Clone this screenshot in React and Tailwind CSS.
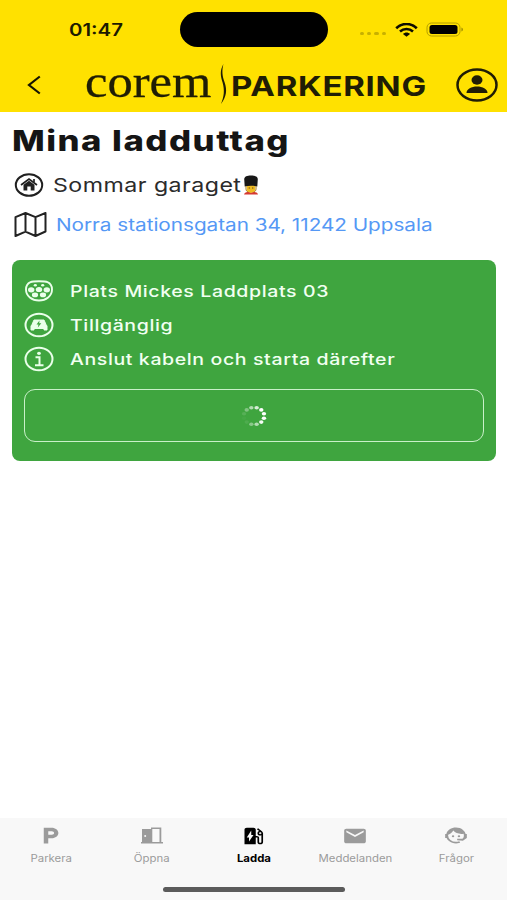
import React from 'react';
import { MdEvStation, MdLocalParking, MdEmail } from 'react-icons/md';

function StatusBar() {
  return (
    <div className="flex h-[59px] items-center">
      <div className="w-[180px] pl-[69px]">
        <span className="inline-block origin-left scale-x-[1.2] text-[17px] font-semibold leading-none text-[#1c1a00]">01:47</span>
      </div>
      <div className="h-[35px] w-[148px] rounded-full bg-black" />
      <div className="ml-8 mt-[8px] flex gap-[3px]">
        {[0, 1, 2, 3].map((i) => (
          <div key={i} className="h-[3.5px] w-[4.2px] rounded-full bg-[#c8b000]" />
        ))}
      </div>
      <svg className="ml-[9px] h-[14px] w-[23px]" viewBox="0 0 23 14" preserveAspectRatio="none" fill="none" stroke="#0d0c00" strokeWidth="2.6">
        <path d="M1.2 5.2C7 -.4 16 -.4 21.8 5.2" />
        <path d="M5 8.5c3.8-3.4 9.2-3.4 13 0" />
        <path d="M8 11c2-2 5-2 7 0l-3.500 2.800z" fill="#0d0c00" stroke="none" />
      </svg>
      <svg className="ml-2 h-[15px] w-[38px]" viewBox="0 0 38 15">
        <rect x="1" y="1" width="33" height="13" rx="4.500" fill="none" stroke="#b39e00" strokeWidth="1" />
        <rect x="3.500" y="3" width="28" height="9" rx="2.500" fill="#000" />
        <path d="M35.500 5.500v4c1.800-.6 1.800-3.400 0-4z" fill="#8f7f00" />
      </svg>
    </div>
  );
}

function Header() {
  return (
    <div className="flex h-[51px] items-center">
      <svg className="ml-[27px] h-[20px] w-[14px]" viewBox="0 0 14 20" fill="none" stroke="#161400" strokeWidth="2.200">
        <path d="M12.800 1.500L2 10l10.800 8.500" />
      </svg>
      <div className="ml-[44px] flex h-[51px] w-[133px] items-center pb-[5px]">
        <span className="inline-block origin-left scale-x-[1.1] font-['Liberation_Serif',serif] text-[46px] leading-none text-[#1f1d05] [-webkit-text-stroke:0.3px_#1f1d05]">corem</span>
      </div>
      <svg className="h-[41px] w-[10px]" viewBox="0 0 12 42" preserveAspectRatio="none" fill="#1f1d05">
        <path d="M6.500 0C2 7 3 12 5.500 19c2.500 8 2 14-2 22 7-8 7.500-14 4.500-22-3-7-3.500-12-1.500-19z" />
      </svg>
      <div className="ml-[3px] w-[200px] pt-[5px]">
        <span className="inline-block origin-left scale-x-[1.22] text-[27px] font-bold leading-none tracking-[0.6px] text-[#1f1d05]">PARKERING</span>
      </div>
      <svg className="ml-[25px] h-[34px] w-[42px]" viewBox="0 0 42 34" fill="#1f1d05">
        <ellipse cx="21" cy="17" rx="19.500" ry="15.500" fill="none" stroke="#1f1d05" strokeWidth="2.500" />
        <ellipse cx="21" cy="12" rx="5.500" ry="4.700" />
        <path d="M10.500 25c0-4 5-6.500 10.500-6.500S31.500 21 31.500 25z" />
      </svg>
    </div>
  );
}

function HomeIcon() {
  return (
    <svg className="h-6 w-[30px]" viewBox="0 0 30 24" fill="none" stroke="#202020">
      <ellipse cx="15" cy="12" rx="13.200" ry="10.800" strokeWidth="2" />
      <path d="M7 12l8-6 8 6" strokeWidth="1.700" />
      <path d="M9.500 11.800L15 7.800l5.500 4V17.500h-3.800v-4h-3.400v4H9.500z" fill="#202020" stroke="none" />
      <path d="M20 6v3" strokeWidth="1.700" />
    </svg>
  );
}

function GuardEmoji() {
  return (
    <svg className="h-[20px] w-[16px]" viewBox="0 0 16 20">
      <path d="M4 9h8v6c0 2-1.800 3-4 3s-4-1-4-3z" fill="#eebb22" />
      <path d="M1 19.500c.5-2 2.500-2.500 4.500-2.500L8 18l2.500-1c2 0 4 .5 4.500 2.500z" fill="#d63a32" />
      <path d="M1.200 4C1.500 1.500 4 .5 8 .5s6.500 1 6.800 3.500l-.5 7.500c-4-1-8.600-1-12.600 0z" fill="#171717" />
      <path d="M3 11v3c0 1.500 1 2.500 2 3M13 11v3c0 1.500-1 2.500-2 3" fill="none" stroke="#a57d18" />
      <path d="M5.700 13h1.200m2.200 0h1.200" stroke="#604010" />
    </svg>
  );
}

function MapIcon() {
  return (
    <svg className="h-[25px] w-[33px]" viewBox="0 0 33 25" fill="none" stroke="#222" strokeWidth="2" strokeLinejoin="round">
      <path d="M1.500 5.200L11.500 1l10 4.200L31.500 1v18.500L21.500 24l-10-4.300L1.500 24zM11.500 1v18.700M21.500 5.200V24" />
    </svg>
  );
}

function SocketIcon() {
  return (
    <svg className="h-[24px] w-[30px]" viewBox="0 0 30 24" fill="#eaffea">
      <path d="M6.500 3.200C9 2 21 2 23.500 3.200c3 1.300 4.500 4 4.500 7.300 0 6.500-6 11-13 11s-13-4.500-13-11c0-3.300 1.500-6 4.500-7.300z" fill="none" stroke="#eaffea" strokeWidth="1.900" />
      <ellipse cx="11.300" cy="6.200" rx="1.600" ry="1.300" />
      <ellipse cx="18.700" cy="6.200" rx="1.600" ry="1.300" />
      <ellipse cx="7.200" cy="10.800" rx="3.200" ry="2.600" />
      <ellipse cx="15" cy="10.500" rx="3.200" ry="2.600" />
      <ellipse cx="22.800" cy="10.800" rx="3.200" ry="2.600" />
      <ellipse cx="11" cy="15.900" rx="3.100" ry="2.400" />
      <ellipse cx="19" cy="15.900" rx="3.100" ry="2.400" />
    </svg>
  );
}

function CarIcon() {
  return (
    <svg className="h-[26px] w-[30px]" viewBox="0 0 30 26">
      <ellipse cx="15" cy="13" rx="13.500" ry="11.300" fill="none" stroke="#eaffea" strokeWidth="2" />
      <path d="M10 8h10l2 4.500 1 1.500v4h-3v-1.500H10V18H7v-4l1-1.500z" fill="#eaffea" stroke="#eaffea" strokeLinejoin="round" />
      <path d="M15.500 8.500l-3 4h2l-.7 3 3.500-4.200h-2.100z" fill="#3fa53f" />
    </svg>
  );
}

function InfoIcon() {
  return (
    <svg className="h-[26px] w-[30px]" viewBox="0 0 30 26" fill="none" stroke="#eaffea">
      <ellipse cx="15" cy="13" rx="13.500" ry="11.300" strokeWidth="2" />
      <path d="M11.500 11.200h4V19M11 19.200h8.500" strokeWidth="2" />
      <ellipse cx="15" cy="7.300" rx="1.900" ry="1.600" fill="#eaffea" stroke="none" />
    </svg>
  );
}

const dots = [0.12, 0.35, 0.6, 0.8, 1, 1, 1, 0.95, 0.6, 0.4, 0.08, 0.03];

function Spinner() {
  return (
    <svg className="h-[22px] w-[26px]" viewBox="0 0 26 22" fill="#fff">
      {dots.map((opacity, i) => {
        const a = ((i * 30 + 195) * Math.PI) / 180;
        return <ellipse key={i} cx={13 + 10.3 * Math.cos(a)} cy={11 + 8.6 * Math.sin(a)} rx="2.200" ry="1.800" opacity={opacity} />;
      })}
    </svg>
  );
}

function DoorIcon() {
  return (
    <svg className="h-[17px] w-[22px]" viewBox="0 0 22 17" fill="#9b9b9b">
      <path d="M1 2h9v14.500H0V15h1z" />
      <path d="M10 .5h10.300V15H22v1.500H10zM11.300 2v13h7.200V2z" fillRule="evenodd" />
      <circle cx="4.200" cy="9" r="1" fill="#f8f8f8" />
    </svg>
  );
}

function AgentIcon() {
  return (
    <svg className="h-[21px] w-[26px]" viewBox="0 0 24 24" preserveAspectRatio="none" fill="currentColor">
      <path d="M18.720 14.760C19.070 13.910 19.260 13 19.260 12C19.260 11.280 19.150 10.590 18.960 9.950C18.310 10.100 17.630 10.180 16.920 10.180C13.860 10.180 11.150 8.670 9.500 6.340C8.610 8.500 6.910 10.260 4.770 11.220C4.730 11.470 4.730 11.740 4.730 12A7.270 7.270 0 0 0 12 19.270C13.050 19.270 14.060 19.040 14.970 18.630C15.540 19.720 15.800 20.260 15.780 20.260C14.140 20.810 12.870 21.080 12 21.080C9.580 21.080 7.270 20.130 5.570 18.420C4.530 17.380 3.760 16.110 3.330 14.730H2V10.180H3.090C3.930 6.040 7.600 2.920 12 2.920C14.400 2.920 16.710 3.870 18.420 5.580C19.690 6.840 20.540 8.450 20.890 10.180H22V14.730H21.940L18.380 18L13.080 17.400V15.730H17.910L18.720 14.760Z" />
      <circle cx="9.270" cy="12.910" r="1.140" />
      <circle cx="14.720" cy="12.910" r="1.140" />
    </svg>
  );
}

const tabs = [
  { label: 'Parkera', icon: <MdLocalParking preserveAspectRatio="none" className="h-[21px] w-[27px]" /> },
  { label: 'Öppna', icon: <DoorIcon /> },
  { label: 'Ladda', icon: <MdEvStation preserveAspectRatio="none" className="h-[22px] w-[27px]" />, active: true },
  { label: 'Meddelanden', icon: <MdEmail preserveAspectRatio="none" className="h-[22px] w-[26px]" /> },
  { label: 'Frågor', icon: <AgentIcon /> },
];

export default function App() {
  return (
    <div className="flex h-[900px] w-[507px] flex-col overflow-hidden bg-white font-['Inter',sans-serif]">
      <header className="h-[112px] shrink-0 bg-[#ffe100]">
        <StatusBar />
        <Header />
      </header>

      <main className="flex-1 px-3 pt-[14px]">
        <h1 className="h-[30px] w-fit origin-left scale-x-[1.24] whitespace-nowrap text-[28px] font-extrabold leading-[30px] tracking-[1.2px] text-[#151515]">Mina ladduttag</h1>

        <div className="mt-[16px] flex h-[26px] items-center pl-[2px]">
          <HomeIcon />
          <div className="ml-[9px] w-[190px] pt-[2px]">
            <span className="inline-block origin-left scale-x-[1.22] whitespace-nowrap text-[19px] leading-none tracking-[0.38px] text-[#2b2b2b]">Sommar garaget</span>
          </div>
          <GuardEmoji />
        </div>

        <div className="mt-[13px] flex h-[26px] items-center pl-[2px]">
          <MapIcon />
          <span className="ml-[9px] mt-[2px] inline-block origin-left scale-x-[1.22] whitespace-nowrap text-[17px] leading-none tracking-[-0.03px] text-[#5598f5]">Norra stationsgatan 34, 11242 Uppsala</span>
        </div>

        <section className="mt-[22.5px] h-[201px] w-[483.5px] rounded-lg bg-[#3fa53f] px-3 pt-[14.5px]">
          <div className="flex h-[34px] items-center">
            <SocketIcon />
            <span className="ml-[15.5px] origin-left scale-x-[1.22] whitespace-nowrap text-[16px] font-medium leading-none tracking-[0.5px] text-[#f1fff1]">Plats Mickes Laddplats 03</span>
          </div>
          <div className="flex h-[34px] items-center">
            <CarIcon />
            <span className="ml-[15.5px] origin-left scale-x-[1.22] whitespace-nowrap text-[16px] font-medium leading-none tracking-[0.5px] text-[#f1fff1]">Tillgänglig</span>
          </div>
          <div className="flex h-[34px] items-center">
            <InfoIcon />
            <span className="ml-[15.5px] origin-left scale-x-[1.22] whitespace-nowrap text-[16px] font-medium leading-none tracking-[0.5px] text-[#f1fff1]">Anslut kabeln och starta därefter</span>
          </div>
          <button className="mt-[13px] flex h-[53px] w-full items-center justify-center rounded-[11px] border border-[#c9f0c9]">
            <Spinner />
          </button>
        </section>
      </main>

      <nav className="flex h-[82px] shrink-0 flex-col items-center bg-[#f8f8f8]">
        <div className="flex h-[69px] w-full">
          {tabs.map((tab) => (
            <div key={tab.label} className={tab.active ? 'flex flex-1 flex-col items-center text-black' : 'flex flex-1 flex-col items-center text-[#9b9b9b]'}>
              <div className="mt-[5.500px] flex h-[24px] items-center">{tab.icon}</div>
              <span className={tab.active ? 'mt-[5.500px] scale-x-[1.14] text-[10px] font-bold leading-none' : 'mt-[5.500px] scale-x-[1.14] text-[10px] leading-none'}>{tab.label}</span>
            </div>
          ))}
        </div>
        <div className="h-[5px] w-[182px] rounded-full bg-[#5b5b5b]" />
      </nav>
    </div>
  );
}
